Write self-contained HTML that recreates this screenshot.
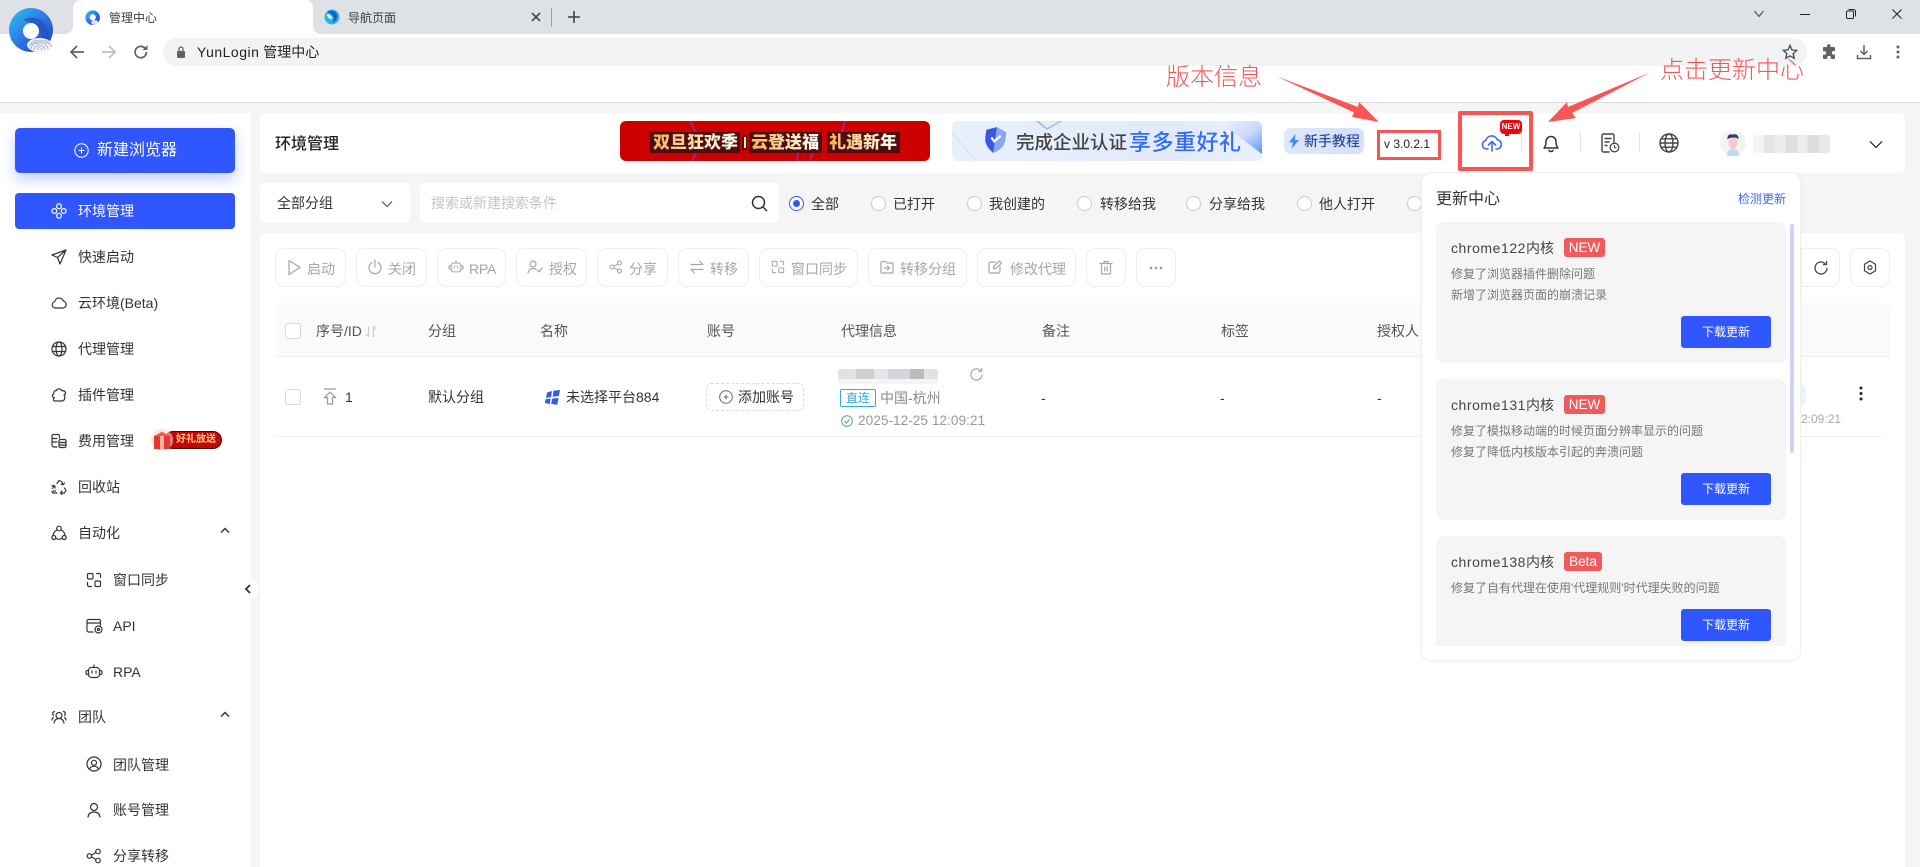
<!DOCTYPE html>
<html lang="zh-CN"><head><meta charset="utf-8"><title>YunLogin 管理中心</title>
<style>
*{box-sizing:border-box;margin:0;padding:0}
html,body{width:1920px;height:867px;overflow:hidden;background:#f5f5f5}
body{position:relative;font-family:"Liberation Sans","Noto Sans CJK SC",sans-serif;font-size:14px;color:#333}
.a,.t,svg.i{position:absolute}
.t{white-space:nowrap;line-height:20px;height:20px}
.s12{font-size:12px}
.btn{position:absolute;top:248px;height:39px;background:#fff;border:1px solid #eee;border-radius:9px}
.g{color:#a6a6a6}
.rad{position:absolute;top:196px;width:15px;height:15px;border-radius:50%;border:1px solid #ccc;background:#fff}
.cb{position:absolute;left:285px;width:16px;height:16px;border:1px solid #d9d9d9;border-radius:3px;background:#fff}
.card{position:absolute;left:1436px;width:350px;background:#f5f5f5;border-radius:8px}
.dl{position:absolute;left:1681px;width:90px;height:32px;background:#3056ff;color:#fff;border-radius:3px;font-size:12px;line-height:32px;text-align:center}
.bd{position:absolute;left:1564px;height:19px;background:#f05a5a;color:#fff;border-radius:3px;font-size:13.5px;line-height:19px;text-align:center;font-weight:500}
.ln{position:absolute;left:1451px;font-size:12px;color:#777;line-height:20px;white-space:nowrap}
.ti{position:absolute;left:1451px;font-size:14px;color:#444;line-height:20px;white-space:nowrap}
.ti span{letter-spacing:.55px}
.pl{position:absolute;top:132px;height:21px;background:#4f0d0d;border-radius:2px}
.gt{position:absolute;top:132px;height:21px;line-height:21px;font-size:17px;font-weight:900;white-space:nowrap;color:transparent;-webkit-background-clip:text;background-clip:text;background-image:linear-gradient(90deg,#f3b35c,#ffe6bd 60%,#fff)}
svg .st,svg.st{fill:none;stroke:currentColor;stroke-width:1.2}
svg.st{stroke-linecap:round;stroke-linejoin:round}
</style></head><body>

<!-- browser chrome -->
<div class="a" style="left:0;top:0;width:1920px;height:103px;background:#fff;border-bottom:1px solid #dcdcdc"></div>
<div class="a" style="left:0;top:0;width:1920px;height:34px;background:#dee1e6"></div>
<div class="a" style="left:73px;top:0;width:240px;height:34px;background:#fff;border-radius:8px 8px 0 0"></div>
<div class="a" style="left:65px;top:26px;width:8px;height:8px;background:#fff"></div>
<div class="a" style="left:65px;top:26px;width:8px;height:8px;background:#dee1e6;border-radius:0 0 8px 0"></div>
<div class="a" style="left:313px;top:26px;width:8px;height:8px;background:#fff"></div>
<div class="a" style="left:313px;top:26px;width:8px;height:8px;background:#dee1e6;border-radius:0 0 0 8px"></div>
<div class="a" style="left:163px;top:38px;width:1644px;height:28px;background:#f1f3f4;border-radius:14px"></div>

<svg class="i" style="left:9px;top:8px" width="46" height="46" viewBox="0 0 46 46">
<defs><linearGradient id="lg" x1="0" y1="0" x2="1" y2="1"><stop offset="0" stop-color="#2ec4f3"/><stop offset=".55" stop-color="#2f6fe0"/><stop offset="1" stop-color="#1c3fb0"/></linearGradient></defs>
<ellipse cx="22" cy="22" rx="22" ry="22" fill="url(#lg)"/>
<path d="M14 12c8-5 20-3 24 8s-1 17-6 19c3-8 1-22-18-27z" fill="#2450c0" opacity=".75"/>
<circle cx="22" cy="23" r="8" fill="#fff"/>
<ellipse cx="30.500" cy="37" rx="12.500" ry="7" fill="#eef1f7"/>
<g fill="none" stroke="#a3aec8" stroke-width=".8"><path d="M22 41c0-8 17-8 17 0M25 42c0-6 11-6 11 0M28 42c0-3 5-3 5 0M20 39c2-7 21-7 23 0M21 36c3-5 16-5 19-1"/></g>
</svg>
<svg class="i" style="left:85px;top:9px" width="16" height="18" viewBox="0 0 46 46"><ellipse cx="22" cy="22" rx="21" ry="21" fill="url(#lg)"/><circle cx="22" cy="21" r="9" fill="#fff"/><ellipse cx="28" cy="36" rx="10" ry="7" fill="#dde2ee"/></svg>
<div class="t s12" style="left:109px;top:8px;color:#3c4043">管理中心</div>
<svg class="i" style="left:324px;top:9px" width="16" height="16" viewBox="0 0 16 16"><circle cx="8" cy="8" r="7.500" fill="#29b5e8"/><path d="M3 3c3-2 9-2 10 3s-3 8-5 7c3-2 3-7-5-10z" fill="#1b5cc8"/><path d="M3 5c3 0 5 2 5 5-3 0-5-2-5-5z" fill="#e8f6fc"/></svg>
<div class="t s12" style="left:348px;top:8px;color:#3c4043">导航页面</div>
<svg class="i" style="left:531px;top:12px" width="10" height="10" viewBox="0 0 10 10"><path d="M1 1l8 8M9 1L1 9" fill="none" stroke="#45494d" stroke-width="1.600"/></svg>
<div class="a" style="left:551px;top:8px;width:1px;height:19px;background:#9aa0a6"></div>
<svg class="i" style="left:568px;top:11px" width="12" height="12" viewBox="0 0 12 12"><path d="M6 0v12M0 6h12" stroke="#3c4043" stroke-width="1.600"/></svg>
<svg class="i" style="left:1754px;top:10px" width="10" height="8" viewBox="0 0 10 8"><path d="M.5 1L5 6.500 9.500 1" fill="none" stroke="#3c4043"/></svg>
<div class="a" style="left:1800px;top:14px;width:10px;height:1px;background:#222"></div>
<svg class="i" style="left:1846px;top:9px" width="10" height="10" viewBox="0 0 10 10"><rect x=".5" y="2" width="7" height="7.500" rx="1.200" fill="none" stroke="#222"/><path d="M2.500 .5h5a2 2 0 012 2v5" fill="none" stroke="#222"/></svg>
<svg class="i" style="left:1892px;top:9px" width="10" height="10" viewBox="0 0 10 10"><path d="M.5.5l9 9M9.500.5l-9 9" stroke="#222"/></svg>

<svg class="i" style="left:69px;top:44px" width="16" height="16" viewBox="0 0 16 16"><path d="M15 8H2M8 2L2 8l6 6" fill="none" stroke="#5f6368" stroke-width="1.700"/></svg>
<svg class="i" style="left:101px;top:44px" width="16" height="16" viewBox="0 0 16 16"><path d="M1 8h13M8 2l6 6-6 6" fill="none" stroke="#bcc0c4" stroke-width="1.700"/></svg>
<svg class="i" style="left:133px;top:44px" width="16" height="16" viewBox="0 0 16 16"><path d="M13.500 8a5.700 5.700 0 11-1.700-4" fill="none" stroke="#5f6368" stroke-width="1.700"/><path d="M14.500 1v5h-5z" fill="#5f6368"/></svg>
<svg class="i" style="left:176px;top:46px" width="10" height="12" viewBox="0 0 10 12"><rect x="1" y="5" width="8" height="7" rx="1" fill="#5f6368"/><path d="M3 5V3a2 2 0 014 0v2" fill="none" stroke="#5f6368" stroke-width="1.300"/></svg>
<div class="t" style="left:197px;top:42px;color:#202124"><span style="letter-spacing:.5px">YunLogin</span> 管理中心</div>
<svg class="i" style="left:1782px;top:44px" width="16" height="16" viewBox="0 0 16 16"><path d="M8 1.500l2 4.400 4.700.5-3.500 3.200 1 4.700L8 11.900l-4.200 2.400 1-4.700L1.300 6.400 6 5.900z" fill="none" stroke="#4a4e52" stroke-width="1.400"/></svg>
<svg class="i" style="left:1821px;top:44px" width="16" height="16" viewBox="0 0 16 16"><path d="M6 1.500a1.800 1.800 0 013.500 0V3h3.500a1 1 0 011 1v3h-1.300a1.800 1.800 0 000 3.600H14V14a1 1 0 01-1 1H9.800v-1.300a1.800 1.800 0 00-3.600 0V15H3a1 1 0 01-1-1v-3.200h1.300a1.800 1.800 0 000-3.600H2V4a1 1 0 011-1h3z" fill="#5f6368"/></svg>
<svg class="i" style="left:1856px;top:44px" width="16" height="16" viewBox="0 0 16 16"><path d="M8 1v9M4.500 7L8 10.500 11.500 7M1.500 11v3.500h13V11" fill="none" stroke="#5f6368" stroke-width="1.500"/></svg>
<svg class="i" style="left:1896px;top:45px" width="4" height="14" viewBox="0 0 4 14"><circle cx="2" cy="2" r="1.500" fill="#5f6368"/><circle cx="2" cy="7" r="1.500" fill="#5f6368"/><circle cx="2" cy="12" r="1.500" fill="#5f6368"/></svg>

<!-- sidebar -->
<div class="a" style="left:0;top:113px;width:250px;height:754px;background:#fff"></div>
<div class="a" style="left:15px;top:128px;width:220px;height:45px;background:#3056ff;border-radius:5px;box-shadow:0 6px 14px rgba(48,86,255,.3)"></div>
<svg class="i" style="left:74px;top:143px" width="15" height="15" viewBox="0 0 15 15"><circle cx="7.500" cy="7.500" r="6.700" fill="none" stroke="#fff"/><path d="M7.500 4.500v6M4.500 7.500h6" stroke="#fff"/></svg>
<div class="t" style="left:97px;top:141px;color:#fff;font-size:16px">新建浏览器</div>
<div class="a" style="left:15px;top:193px;width:220px;height:36px;background:#3056ff;border-radius:4px"></div>
<svg class="i st" style="left:51px;top:203px;color:#fff" width="16" height="16" viewBox="0 0 16 16"><circle cx="8" cy="3.300" r="2.400"/><circle cx="8" cy="12.700" r="2.400"/><circle cx="3.300" cy="8" r="2.400"/><circle cx="12.700" cy="8" r="2.400"/></svg>
<div class="t" style="left:78px;top:201px;color:#fff">环境管理</div>

<svg class="i st" style="left:51px;top:249px" width="16" height="16" viewBox="0 0 16 16"><path d="M15 1L1 6l5.500 2.500L9 15zM6.500 8.500L15 1"/></svg>
<div class="t" style="left:78px;top:247px">快速启动</div>
<svg class="i st" style="left:51px;top:295px" width="16" height="16" viewBox="0 0 16 16"><path d="M4.200 13a3.200 3.200 0 01-.5-6.300 4.500 4.500 0 018.700-.6A3.500 3.500 0 0112 13z"/></svg>
<div class="t" style="left:78px;top:293px">云环境(Beta)</div>
<svg class="i st" style="left:51px;top:341px" width="16" height="16" viewBox="0 0 16 16"><circle cx="8" cy="8" r="7"/><ellipse cx="8" cy="8" rx="3" ry="7"/><path d="M1.500 5.500h13M1.500 10.500h13"/></svg>
<div class="t" style="left:78px;top:339px">代理管理</div>
<svg class="i st" style="left:51px;top:387px" width="16" height="16" viewBox="0 0 16 16"><path d="M5.500 3.500C6 1.500 10 1 10.500 3.500L13 4C15 4.500 15 7.500 13 8c1.500 2 1 5.500-2 6H4c-2 0-2-2-.5-3.200C1 10 .5 8 2.800 7L3 5c.3-1 1.500-1.500 2.500-1.500z"/></svg>
<div class="t" style="left:78px;top:385px">插件管理</div>
<svg class="i st" style="left:51px;top:433px" width="16" height="16" viewBox="0 0 16 16"><path d="M6 14H3a2 2 0 01-2-2V3a1.500 1.500 0 011.500-1.500H7a1.500 1.500 0 011.500 1.500v2M1 5.500h5M1 9h5"/><rect x="8" y="6.500" width="7" height="8" rx="1.500"/><path d="M8 9.500h7M8 12h7"/></svg>
<div class="t" style="left:78px;top:431px">费用管理</div>
<div class="a" style="left:164px;top:431px;width:58px;height:18px;background:#c40606;border-radius:9px;border:1px solid #4a0505"></div>
<div class="t" style="left:176px;top:430px;color:#ffcf7d;font-size:10px;font-weight:700">好礼放送</div>
<svg class="i" style="left:150px;top:428px" width="24" height="24" viewBox="0 0 24 24"><circle cx="12" cy="12" r="11" fill="#ffd2c8" opacity=".6"/><rect x="4" y="8" width="16" height="13" fill="#e23a32"/><rect x="10" y="4" width="4" height="17" fill="#ffb2a0"/><path d="M4 8l8-4 8 4z" fill="#ef5a4e"/></svg>
<svg class="i st" style="left:51px;top:479px" width="16" height="16" viewBox="0 0 16 16"><path d="M6 4.500L8 1.500l2.500 1 1.500 3M13.500 4l-1.300 1.600-2-.3M1.500 9.500L3 7M1 12.500l1 1.500h4M4.500 12l-2.200 0M10 14h3.500l1.500-2.500-1.500-2.500M11 12l-1.500 2 1.500 1.500M1 7l2.500-.5.700 2.500"/></svg>
<div class="t" style="left:78px;top:477px">回收站</div>
<svg class="i st" style="left:51px;top:525px" width="16" height="16" viewBox="0 0 16 16"><circle cx="8" cy="3.500" r="2.300"/><circle cx="2.800" cy="12.500" r="2"/><circle cx="13.200" cy="12.500" r="2"/><path d="M5.800 5a7 7 0 00-3.800 5.500M10.200 5a7 7 0 013.800 5.500M4.800 13.500a8 8 0 006.400 0"/></svg>
<div class="t" style="left:78px;top:523px">自动化</div>
<svg class="i" style="left:220px;top:527px" width="10" height="7" viewBox="0 0 10 7"><path d="M1 5.500L5 1.500l4 4" fill="none" stroke="#333" stroke-width="1.500"/></svg>
<svg class="i st" style="left:86px;top:572px" width="16" height="16" viewBox="0 0 16 16"><rect x="1.500" y="1.500" width="5.500" height="5.500" rx="1.200"/><rect x="9" y="9" width="5.500" height="5.500" rx="1.200"/><path d="M10.500 1.500H13a1.500 1.500 0 011.500 1.500v2.500M5.500 14.500H3A1.500 1.500 0 011.500 13v-2.500"/></svg>
<div class="t" style="left:113px;top:570px">窗口同步</div>
<svg class="i st" style="left:86px;top:618px" width="17" height="16" viewBox="0 0 17 16"><path d="M7 14H3a2 2 0 01-2-2V3a1.500 1.500 0 011.500-1.500H13A1.500 1.500 0 0114.500 3v4M1 5h13.500"/><circle cx="12.500" cy="11.500" r="3.500"/><circle cx="12.500" cy="11.500" r="1"/></svg>
<div class="t" style="left:113px;top:616px">API</div>
<svg class="i st" style="left:85px;top:664px" width="18" height="16" viewBox="0 0 18 16"><rect x="3.500" y="3.500" width="11" height="10" rx="3"/><path d="M9 3.500V1M3.500 6.500h-1a1.500 1.500 0 00-1.500 1.500v1a1.500 1.500 0 001.500 1.500h1M14.500 6.500h1A1.500 1.500 0 0117 8v1a1.500 1.500 0 01-1.500 1.500h-1M7 7v2M11 7v2"/></svg>
<div class="t" style="left:113px;top:662px">RPA</div>
<svg class="i st" style="left:51px;top:709px" width="16" height="16" viewBox="0 0 16 16"><circle cx="8" cy="6.500" r="3"/><path d="M3 14c.5-3 2.500-4.500 5-4.500s4.500 1.500 5 4.500M3.500 2.500a2.300 2.300 0 00-1 4M12.500 2.500a2.300 2.300 0 011 4M1 11c0-1 .5-2 1.500-2.500M15 11c0-1-.5-2-1.500-2.500"/></svg>
<div class="t" style="left:78px;top:707px">团队</div>
<svg class="i" style="left:220px;top:711px" width="10" height="7" viewBox="0 0 10 7"><path d="M1 5.500L5 1.500l4 4" fill="none" stroke="#333" stroke-width="1.500"/></svg>
<svg class="i st" style="left:86px;top:756px" width="16" height="16" viewBox="0 0 16 16"><circle cx="8" cy="8" r="7"/><circle cx="8" cy="6.800" r="2.500"/><path d="M3.500 13c1-2 2.500-2.800 4.500-2.800s3.500.8 4.500 2.800"/></svg>
<div class="t" style="left:113px;top:755px">团队管理</div>
<svg class="i st" style="left:86px;top:802px" width="16" height="16" viewBox="0 0 16 16"><circle cx="8" cy="5" r="3.500"/><path d="M2 15c.5-3.500 3-5 6-5s5.500 1.500 6 5"/></svg>
<div class="t" style="left:113px;top:800px">账号管理</div>
<svg class="i st" style="left:86px;top:848px" width="16" height="16" viewBox="0 0 16 16"><circle cx="3.500" cy="8" r="2.300"/><circle cx="12" cy="3.500" r="2.300"/><circle cx="12" cy="12.500" r="2.300"/><path d="M5.500 7l4.500-2.500M5.500 9l4.500 2.500"/></svg>
<div class="t" style="left:113px;top:846px">分享转移</div>
<div class="a" style="left:237px;top:578px;width:22px;height:22px;border-radius:50%;background:#fff"></div>
<svg class="i" style="left:244px;top:584px" width="8" height="10" viewBox="0 0 8 10"><path d="M6 1L2 5l4 4" fill="none" stroke="#333" stroke-width="1.800"/></svg>

<!-- top header card -->
<div class="a" style="left:260px;top:113px;width:1645px;height:60px;background:#fff;border-radius:6px"></div>
<div class="t" style="left:275px;top:135px;font-size:16px;font-weight:500;color:#222">环境管理</div>
<div class="a" style="left:620px;top:121px;width:310px;height:40px;background:#cc0000;border-radius:6px;overflow:hidden">
  <svg width="310" height="40" style="position:absolute;left:0;top:0"><path d="M70 0l6 12M72 40q4-10 10-14M225 0l-4 14M190 40l4-12M178 40q-2-6 2-10" stroke="#9a2f8c" stroke-width="2.500" fill="none" opacity=".7"/></svg>
</div>
<div class="pl" style="left:650px;width:90px"></div>
<div class="gt" style="left:653px">双旦狂欢季</div>
<div class="a" style="left:742px;top:135px;width:5px;height:15px;background:#4f0d0d"></div>
<div class="a" style="left:743.500px;top:137px;width:2px;height:11px;background:#ffe6bd"></div>
<div class="pl" style="left:749px;width:73px"></div>
<div class="gt" style="left:751px">云登送福</div>
<div class="pl" style="left:827px;width:73px"></div>
<div class="gt" style="left:829px">礼遇新年</div>

<div class="a" style="left:952px;top:121px;width:310px;height:40px;border-radius:6px;overflow:hidden;background:linear-gradient(90deg,#e9effc,#e2eafb 70%,#e9effc)">
  <svg width="310" height="40" style="position:absolute;left:0;top:0">
    <defs><linearGradient id="bb" x1="0" y1="0" x2="1" y2="1"><stop offset="0" stop-color="#eef3ff"/><stop offset=".55" stop-color="#c9daff"/><stop offset="1" stop-color="#5a92f7"/></linearGradient></defs>
    <path d="M266 0h44v33z" fill="url(#bb)"/>
    <path d="M85 0l10 8 14-8" fill="none" stroke="#9db8f2" stroke-width="1.500"/>
    <path d="M0 12l24 28" fill="none" stroke="#d3ddf4" stroke-width="1"/>
  </svg>
</div>
<svg class="i" style="left:983px;top:126px" width="25" height="28" viewBox="0 0 25 28"><g transform="rotate(8 12 14)"><path d="M12 1l10 4v8c0 6-4.500 11-10 14C7 24 2 19 2 13V5z" fill="#3a56e8"/><path d="M12 1l10 4v8c0 6-4.500 11-10 14z" fill="#84a6fb"/><path d="M8 12l3.500 3.500L17 9" fill="none" stroke="#fff" stroke-width="2.200"/></g></svg>
<div class="t" style="left:1016px;top:133px;font-size:18.500px;font-weight:500;color:#444">完成企业认证</div>
<div class="t" style="left:1129px;top:132px;font-size:22px;font-weight:500;color:#2f6bff;line-height:22px;letter-spacing:.5px">享多重好礼</div>

<div class="a" style="left:1284px;top:128px;width:80px;height:26px;border-radius:7px;background:linear-gradient(90deg,#dde8fb,#d6e1fa)"></div>
<svg class="i" style="left:1288px;top:134px" width="12" height="15" viewBox="0 0 12 15"><path d="M7.500 0L1 8.500h4L3.500 15 11 6H7z" fill="#3f8cf5"/></svg>
<div class="t" style="left:1304px;top:131px;font-weight:500;color:#2a4f9e">新手教程</div>

<div class="a" style="left:1377px;top:130px;width:64px;height:30px;border:3px solid #f95555;background:#fff"></div>
<div class="t s12" style="left:1384px;top:134px;color:#222">v 3.0.2.1</div>

<!-- header icons -->
<div class="a" style="left:1462px;top:132px;width:1px;height:20px;background:#e5e5e5"></div>
<div class="a" style="left:1521px;top:132px;width:1px;height:20px;background:#e5e5e5"></div>
<div class="a" style="left:1580px;top:132px;width:1px;height:20px;background:#e5e5e5"></div>
<div class="a" style="left:1639px;top:132px;width:1px;height:20px;background:#e5e5e5"></div>
<div class="a" style="left:1458px;top:111px;width:75px;height:60px;border:4px solid #f95555;border-radius:2px"></div>
<svg class="i" style="left:1481px;top:134px" width="22" height="18" viewBox="0 0 22 18"><path d="M7 15H5.500a4.300 4.300 0 01-.7-8.500 6 6 0 0111.400-.8A4.700 4.700 0 0116.500 15H15M11 17V8M7.500 11L11 7.500l3.500 3.500" fill="none" stroke="#3b6cf6" stroke-width="1.600" stroke-linecap="round" stroke-linejoin="round"/></svg>
<div class="a" style="left:1500px;top:120px;width:22px;height:14px;background:#f4000e;border-radius:4px"></div>
<div class="a" style="left:1505px;top:133px;width:4px;height:3px;background:#f4000e"></div>
<div class="a" style="left:1500px;top:120px;width:22px;height:14px;color:#fff;font-size:8px;font-weight:700;line-height:14px;text-align:center">NEW</div>
<svg class="i" style="left:1542px;top:133px" width="18" height="20" viewBox="0 0 18 20"><path d="M2 15c1.500-1.500 2-3 2-6.500a5 5 0 0110 0c0 3.500.5 5 2 6.500zM7 17.500c1 1.300 3 1.300 4 0" fill="none" stroke="#333" stroke-width="1.500" stroke-linejoin="round" stroke-linecap="round"/></svg>
<svg class="i" style="left:1600px;top:133px" width="20" height="20" viewBox="0 0 20 20"><path d="M9 19H3.500A1.500 1.500 0 012 17.500v-15A1.500 1.500 0 013.500 1h9A1.500 1.500 0 0114 2.500V9M5 5.500h6M5 9h4M5 12.500h2" fill="none" stroke="#444" stroke-width="1.400" stroke-linecap="round"/><circle cx="14.500" cy="14.500" r="4.300" fill="#fff" stroke="#444" stroke-width="1.300"/><path d="M14.500 12v2.700h2" fill="none" stroke="#444"/></svg>
<svg class="i" style="left:1659px;top:133px" width="20" height="20" viewBox="0 0 20 20"><g fill="none" stroke="#444" stroke-width="1.400"><circle cx="10" cy="10" r="9"/><ellipse cx="10" cy="10" rx="4" ry="9"/><path d="M1 10h18M2.200 5.800h15.600M2.200 14.200h15.600"/></g></svg>
<svg class="i" style="left:1720px;top:130px" width="26" height="26" viewBox="0 0 26 26"><circle cx="13" cy="13" r="13" fill="#f3f3f4"/><path d="M7 26c0-5 2-7 6-7s6 2 6 7z" fill="#bcdcf5"/><ellipse cx="13" cy="13" rx="4.500" ry="6" fill="#fbc9c9"/><path d="M7.500 9.500C7 5 10 3.500 13 4.500c3-1 6 .5 5.500 5-1.500-2-3-2-5.500-2s-4 .5-5.500 2z" fill="#2b3a72"/></svg>
<div class="a" style="left:1753px;top:135px;width:77px;height:18px;background:linear-gradient(90deg,#f4f4f4 0 14%,#e4e4e4 14% 28%,#ececec 28% 43%,#dedede 43% 57%,#ececec 57% 71%,#dcdcdc 71% 86%,#e8e8e8 86%);border-radius:4px 0 0 4px"></div>
<svg class="i" style="left:1869px;top:140px" width="14" height="9" viewBox="0 0 14 9"><path d="M1 1.500l6 6 6-6" fill="none" stroke="#333" stroke-width="1.300"/></svg>

<!-- filter row -->
<div class="a" style="left:260px;top:183px;width:150px;height:40px;background:#fff;border-radius:6px"></div>
<div class="t" style="left:277px;top:193px">全部分组</div>
<svg class="i" style="left:381px;top:200px" width="12" height="8" viewBox="0 0 12 8"><path d="M1 1.500l5 5 5-5" fill="none" stroke="#555" stroke-width="1.200"/></svg>
<div class="a" style="left:420px;top:183px;width:359px;height:40px;background:#fff;border-radius:6px"></div>
<div class="t" style="left:431px;top:193px;color:#c4c4c4">搜索或新建搜索条件</div>
<svg class="i" style="left:751px;top:195px" width="17" height="17" viewBox="0 0 17 17"><circle cx="7.500" cy="7.500" r="6" fill="none" stroke="#333" stroke-width="1.500"/><path d="M12 12l4 4" stroke="#333" stroke-width="1.500"/></svg>
<div class="rad" style="left:789px;border-color:#3056ff"></div>
<div class="a" style="left:793px;top:200px;width:7px;height:7px;border-radius:50%;background:#3056ff"></div>
<div class="t" style="left:811px;top:194px">全部</div>
<div class="rad" style="left:871px"></div><div class="t" style="left:893px;top:194px">已打开</div>
<div class="rad" style="left:967px"></div><div class="t" style="left:989px;top:194px">我创建的</div>
<div class="rad" style="left:1077px"></div><div class="t" style="left:1100px;top:194px">转移给我</div>
<div class="rad" style="left:1186px"></div><div class="t" style="left:1209px;top:194px">分享给我</div>
<div class="rad" style="left:1297px"></div><div class="t" style="left:1319px;top:194px">他人打开</div>
<div class="rad" style="left:1407px"></div>

<!-- main card -->
<div class="a" style="left:260px;top:233px;width:1645px;height:634px;background:#fff;border-radius:6px 6px 0 0"></div>

<div class="btn" style="left:275px;width:71px"></div>
<svg class="i st g" style="left:286px;top:259px" width="16" height="17" viewBox="0 0 16 17"><path d="M3 1.500l11 7-11 7z"/></svg>
<div class="t g" style="left:307px;top:259px">启动</div>
<div class="btn" style="left:356px;width:71px"></div>
<svg class="i st g" style="left:367px;top:259px" width="16" height="17" viewBox="0 0 16 17"><path d="M5 3.500a6 6 0 106 0M8 1v7"/></svg>
<div class="t g" style="left:388px;top:259px">关闭</div>
<div class="btn" style="left:437px;width:69px"></div>
<svg class="i st g" style="left:448px;top:259px" width="16" height="16" viewBox="0 0 18 16"><rect x="3.500" y="3.500" width="11" height="10" rx="3"/><path d="M9 3.500V1M3.500 6.500h-1a1.500 1.500 0 00-1.500 1.500v1a1.500 1.500 0 001.500 1.500h1M14.500 6.500h1A1.500 1.500 0 0117 8v1a1.500 1.500 0 01-1.500 1.500h-1M7 7v2M11 7v2"/></svg>
<div class="t g" style="left:469px;top:259px;letter-spacing:-.2px">RPA</div>
<div class="btn" style="left:516px;width:71px"></div>
<svg class="i st g" style="left:527px;top:260px" width="16" height="15" viewBox="0 0 16 15"><circle cx="6" cy="4" r="3"/><path d="M1 13c.5-3 2.500-4.500 5-4.500 1 0 2 .2 2.800.7M10 10l2 2 3-4"/></svg>
<div class="t g" style="left:549px;top:259px">授权</div>
<div class="btn" style="left:597px;width:71px"></div>
<svg class="i st g" style="left:609px;top:260px" width="14" height="14" viewBox="0 0 16 16"><circle cx="3.500" cy="8" r="2.300"/><circle cx="12" cy="3.500" r="2.300"/><circle cx="12" cy="12.500" r="2.300"/><path d="M5.500 7l4.500-2.500M5.500 9l4.500 2.500"/></svg>
<div class="t g" style="left:629px;top:259px">分享</div>
<div class="btn" style="left:678px;width:71px"></div>
<svg class="i st g" style="left:690px;top:260px" width="14" height="14" viewBox="0 0 14 14"><path d="M1 4.500h12L9.500 1M13 9.500H1L4.500 13"/></svg>
<div class="t g" style="left:710px;top:259px">转移</div>
<div class="btn" style="left:759px;width:99px"></div>
<svg class="i st g" style="left:771px;top:260px" width="14" height="14" viewBox="0 0 16 16"><rect x="1.500" y="1.500" width="5.500" height="5.500" rx="1.200"/><rect x="9" y="9" width="5.500" height="5.500" rx="1.200"/><path d="M10.500 1.500H13a1.500 1.500 0 011.500 1.500v2.500M5.500 14.500H3A1.500 1.500 0 011.500 13v-2.500"/></svg>
<div class="t g" style="left:791px;top:259px">窗口同步</div>
<div class="btn" style="left:868px;width:99px"></div>
<svg class="i st g" style="left:880px;top:260px" width="14" height="14" viewBox="0 0 14 14"><path d="M1 2.500a1 1 0 011-1h3.500l1.500 1.500h5a1 1 0 011 1V12a1 1 0 01-1 1H2a1 1 0 01-1-1zM4 8h5.500M7.500 6l2 2-2 2"/></svg>
<div class="t g" style="left:900px;top:259px">转移分组</div>
<div class="btn" style="left:977px;width:99px"></div>
<svg class="i st g" style="left:988px;top:260px" width="14" height="14" viewBox="0 0 14 14"><path d="M7 2H2.500A1.500 1.500 0 001 3.500v8A1.500 1.500 0 002.500 13h8a1.500 1.500 0 001.500-1.500V7M5.500 8.500l.5-2.500 5.500-5 2 2-5.500 5.500z"/></svg>
<div class="t g" style="left:1010px;top:259px">修改代理</div>
<div class="btn" style="left:1086px;width:40px"></div>
<svg class="i st g" style="left:1099px;top:260px" width="14" height="15" viewBox="0 0 14 15"><path d="M1 3.500h12M5 3.500V1.500h4v2M2.500 3.500v9.500a1 1 0 001 1h7a1 1 0 001-1V3.500M5.800 7v4M8.200 7v4"/></svg>
<div class="btn" style="left:1136px;width:40px"></div>
<svg class="i" style="left:1149px;top:266px" width="14" height="4" viewBox="0 0 14 4"><circle cx="2" cy="2" r="1.300" fill="#999"/><circle cx="7" cy="2" r="1.300" fill="#999"/><circle cx="12" cy="2" r="1.300" fill="#999"/></svg>
<div class="btn" style="left:1801px;width:39px;border-radius:0 9px 9px 0"></div>
<svg class="i" style="left:1813px;top:260px" width="16" height="16" viewBox="0 0 16 16"><path d="M14 8a6 6 0 11-1.800-4.300" fill="none" stroke="#444" stroke-width="1.300"/><path d="M13.500 1v3.500H10" fill="none" stroke="#444" stroke-width="1.300"/></svg>
<div class="btn" style="left:1850px;width:40px"></div>
<svg class="i" style="left:1863px;top:260px" width="14" height="15" viewBox="0 0 14 15"><path d="M7 1l5.500 3.200v6.600L7 14l-5.500-3.200V4.200z" fill="none" stroke="#444" stroke-width="1.200"/><circle cx="7" cy="7.500" r="2" fill="none" stroke="#444" stroke-width="1.200"/></svg>

<!-- table -->
<div class="a" style="left:275px;top:303px;width:1615px;height:54px;background:#fafafa;border-radius:8px 8px 0 0;border-bottom:1px solid #efefef"></div>
<div class="cb" style="top:323px"></div>
<div class="t" style="left:316px;top:321px;color:#555">序号/ID</div>
<svg class="i" style="left:365px;top:325px" width="12" height="13" viewBox="0 0 12 13"><path d="M3.500 1v11M3.500 12L1 9M8.500 12V1M8.500 1L11 4" fill="none" stroke="#ccc" stroke-width="1.200"/></svg>
<div class="t" style="left:428px;top:321px;color:#555">分组</div>
<div class="t" style="left:540px;top:321px;color:#555">名称</div>
<div class="t" style="left:707px;top:321px;color:#555">账号</div>
<div class="t" style="left:841px;top:321px;color:#555">代理信息</div>
<div class="t" style="left:1042px;top:321px;color:#555">备注</div>
<div class="t" style="left:1221px;top:321px;color:#555">标签</div>
<div class="t" style="left:1377px;top:321px;color:#555">授权人</div>

<div class="a" style="left:275px;top:436px;width:1608px;height:1px;background:#efefef"></div>
<div class="cb" style="top:389px"></div>
<svg class="i" style="left:323px;top:388px" width="14" height="17" viewBox="0 0 14 17"><path d="M1 1h12M7 4L1.500 9.500H4.500V16h5V9.500h3z" fill="none" stroke="#999" stroke-width="1.200"/></svg>
<div class="t" style="left:345px;top:387px;color:#333">1</div>
<div class="t" style="left:428px;top:387px">默认分组</div>
<svg class="i" style="left:545px;top:390px" width="16" height="16" viewBox="0 0 16 16"><path d="M2 2.500l5-1.500-1 6-5 1zM8.500.7L15 0l-1.200 6-6 .7zM.7 9.200l5-.7-1 5.500-5-1zM7.300 8.500l6.200-.5-1.200 6.700L6.200 14z" fill="#2f5bf0"/></svg>
<div class="t" style="left:566px;top:387px">未选择平台884</div>
<div class="a" style="left:706px;top:383px;width:98px;height:28px;border:1px dashed #ddd;border-radius:5px"></div>
<svg class="i" style="left:719px;top:390px" width="14" height="14" viewBox="0 0 14 14"><circle cx="7" cy="7" r="6.300" fill="none" stroke="#666"/><path d="M7 4.500v5M4.500 7h5" stroke="#666"/></svg>
<div class="t" style="left:738px;top:387px">添加账号</div>
<div class="a" style="left:838px;top:369px;width:100px;height:10px;background:linear-gradient(90deg,#e2e2e6 0 18%,#cfcfd2 18% 36%,#e6e6ea 36% 50%,#d8d4dc 50% 72%,#bcbcbc 72% 86%,#e0e2e6 86%)"></div>
<div class="a" style="left:838px;top:379px;width:100px;height:5px;background:#f5f5f6"></div>
<svg class="i" style="left:969px;top:367px" width="15" height="15" viewBox="0 0 16 16"><path d="M14 8a6 6 0 11-1.800-4.300" fill="none" stroke="#999" stroke-width="1.100"/><path d="M13.500 1v3.500H10" fill="none" stroke="#999" stroke-width="1.100"/></svg>
<div class="a" style="left:840px;top:389px;width:36px;height:18px;border:1px solid #39a9d8;border-radius:2px;color:#39a9d8;font-size:12px;line-height:16px;text-align:center">直连</div>
<div class="t" style="left:880px;top:388px;color:#888">中国-杭州</div>
<svg class="i" style="left:841px;top:415px" width="12" height="12" viewBox="0 0 12 12"><circle cx="6" cy="6" r="5.300" fill="none" stroke="#3cb48c"/><path d="M3.500 6l2 2 3-3.500" fill="none" stroke="#3cb48c"/></svg>
<div class="t" style="left:858px;top:411px;color:#999;font-size:13.700px">2025-12-25 12:09:21</div>
<div class="t" style="left:1041px;top:388px">-</div>
<div class="t" style="left:1220px;top:388px">-</div>
<div class="t" style="left:1377px;top:388px">-</div>
<div class="a" style="left:1801px;top:384px;width:5px;height:22px;background:#eef2fd;border-radius:0 6px 6px 0"></div>
<div class="t" style="left:1801px;top:409px;color:#aaa;font-size:12px">2:09:21</div>
<svg class="i" style="left:1859px;top:386px" width="4" height="15" viewBox="0 0 4 15"><circle cx="2" cy="2" r="1.500" fill="#222"/><circle cx="2" cy="7.500" r="1.500" fill="#222"/><circle cx="2" cy="13" r="1.500" fill="#222"/></svg>

<!-- update popover -->
<div class="a" style="left:1421px;top:172px;width:380px;height:489px;background:#fff;border:1px solid #f0f0f0;border-radius:10px;box-shadow:0 1px 4px rgba(0,0,0,.03)"></div>
<div class="t" style="left:1436px;top:190px;font-size:16px;color:#333">更新中心</div>
<div class="t s12" style="left:1738px;top:189px;color:#3f68f5">检测更新</div>
<div class="a" style="left:1790px;top:224px;width:4px;height:229px;background:#cbd6f6;border-radius:2px"></div>

<div class="card" style="top:222px;height:141px"></div>
<div class="ti" style="top:238px"><span>chrome122</span>内核</div>
<div class="bd" style="top:238px;width:41px">NEW</div>
<div class="ln" style="top:264px">修复了浏览器插件删除问题</div>
<div class="ln" style="top:285px">新增了浏览器页面的崩溃记录</div>
<div class="dl" style="top:316px">下载更新</div>

<div class="card" style="top:379px;height:141px"></div>
<div class="ti" style="top:395px"><span>chrome131</span>内核</div>
<div class="bd" style="top:395px;width:41px">NEW</div>
<div class="ln" style="top:421px">修复了模拟移动端的时候页面分辨率显示的问题</div>
<div class="ln" style="top:442px">修复了降低内核版本引起的奔溃问题</div>
<div class="dl" style="top:473px">下载更新</div>

<div class="card" style="top:536px;height:110px;border-radius:8px 8px 0 0"></div>
<div class="ti" style="top:552px"><span>chrome138</span>内核</div>
<div class="bd" style="top:552px;width:38px">Beta</div>
<div class="ln" style="top:578px">修复了自有代理在使用'代理规则'时代理失败的问题</div>
<div class="dl" style="top:609px">下载更新</div>

<!-- annotations -->
<div class="t" style="left:1166px;top:61px;height:34px;line-height:34px;font-size:24px;color:#f95555;font-weight:300">版本信息</div>
<div class="t" style="left:1660px;top:54px;height:34px;line-height:34px;font-size:24px;color:#f95555;font-weight:300">点击更新中心</div>
<svg class="i" style="left:1270px;top:70px" width="390" height="60" viewBox="1270 70 390 60">
<path d="M1277 76.500L1358 107l1-5 20 20-27-5 2-4.500z" fill="#f95555"/>
<path d="M1650 72.500L1568 107l-1-5-19 20 28-4-4-5z" fill="#f95555"/>
</svg>
</body></html>
